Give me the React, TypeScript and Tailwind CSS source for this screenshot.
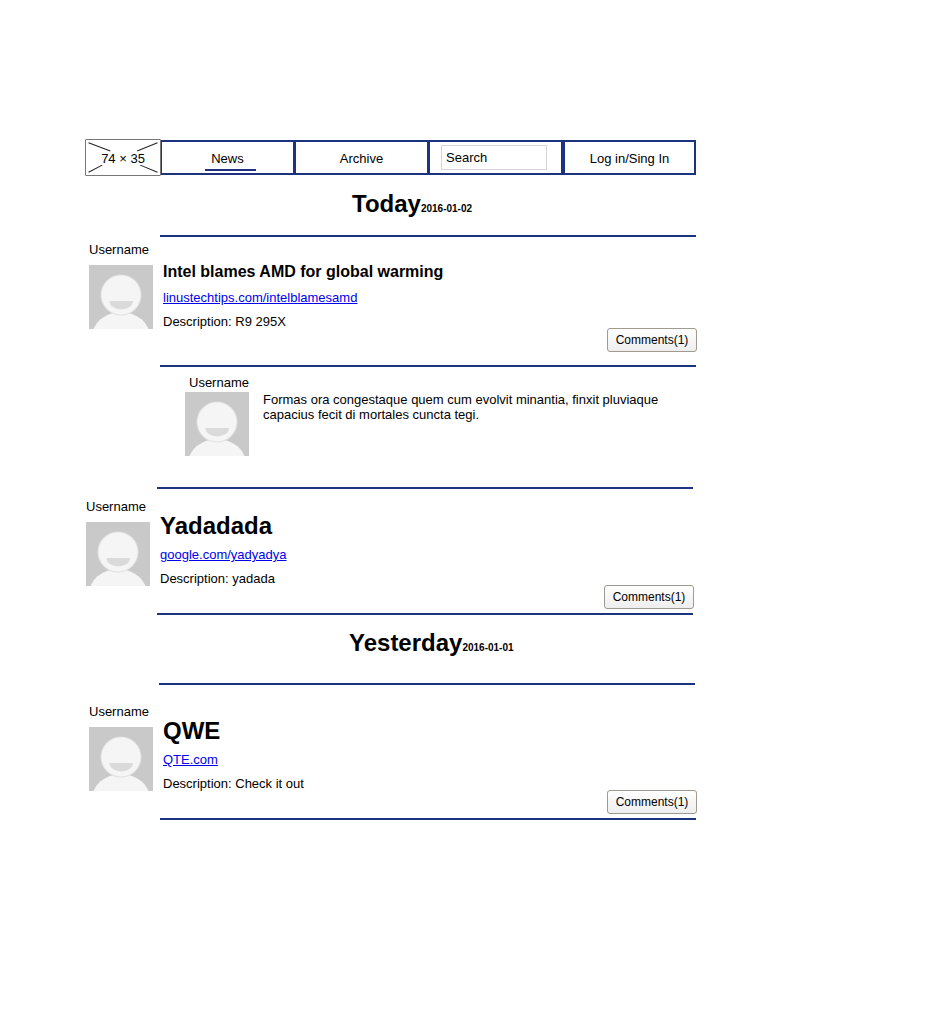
const navClass = "flex h-[35px] items-center justify-center border-2 border-[#1c3380] text-[13px] leading-4 text-black";

function LogoPlaceholder() {
  return (
    <div className="relative flex h-[37px] w-[76px] items-center justify-center rounded-[1px] border-[1.5px] border-[#777] pt-0.5 text-[13px] text-black">
      <svg className="absolute inset-0 h-full w-full" viewBox="0 0 73 34" fill="none" stroke="#222" strokeWidth="1">
        <path d="M2.5 2.5 L24 10.5 M70.5 2.5 L50.5 10.5 M2.5 31.5 L16 24.5 M70.5 31.5 L53.5 24.5" />
      </svg>
      <span className="relative">74 × 35</span>
    </div>
  );
}

function Avatar() {
  return (
    <svg className="block h-16 w-16 shrink-0" viewBox="0 0 64 64">
      <rect width="64" height="64" fill="#c9c9c9" />
      <ellipse cx="32" cy="72" rx="29" ry="25" fill="#f5f5f5" />
      <circle cx="32" cy="30" r="20.5" fill="#e2e2e2" />
      <circle cx="32" cy="30" r="19.5" fill="#f5f5f5" />
      <path d="M20.5 36 H44 A11.75 8.5 0 0 1 20.5 36 Z" fill="#dadada" />
    </svg>
  );
}

function Divider({ className }: { className: string }) {
  return <div className={`h-0.5 w-[536px] bg-[#1c3380] ${className}`} />;
}

function CommentsButton() {
  return (
    <button className="flex h-6 w-[90px] items-center justify-center rounded-[3px] border border-[#a09a90] bg-gradient-to-b from-white to-[#eeeeee] text-xs text-black">
      Comments(1)
    </button>
  );
}

function Post({ title, titleClass, href, desc }: { title: string; titleClass: string; href: string; desc: string }) {
  return (
    <div className="relative">
      <p className="ml-1 h-4 text-[13px] leading-4 text-black">Username</p>
      <div className="mt-[7px] flex">
        <div className="ml-1">
          <Avatar />
        </div>
        <div className="ml-2.5 flex h-[65px] flex-col justify-end">
          <h3 className={`font-bold text-black ${titleClass}`}>{title}</h3>
          <a href="#" className="mt-[5px] h-4 text-[13px] leading-4 text-[#0000ee] underline">{href}</a>
          <p className="mt-2 h-4 text-[13px] leading-4 text-black">{desc}</p>
        </div>
      </div>
      <div className="-mt-0.5 flex w-[612px] justify-end">
        <CommentsButton />
      </div>
    </div>
  );
}

export default function App() {
  return (
    <div className="min-h-[1011px] bg-white pl-[85px] pt-[139px] font-['Liberation_Sans',Arial,sans-serif]">
      <nav className="flex items-start">
        <LogoPlaceholder />
        <div className="-ml-px mt-px flex">
          <div className={`${navClass} w-[135px]`}>
            <span className="relative pt-[2px]">
              News
              <span className="absolute -bottom-1 left-[-6px] h-0.5 w-[51px] bg-[#1c3380]" />
            </span>
          </div>
          <div className={`${navClass} -ml-px w-[135px] pt-[2px]`}>Archive</div>
          <div className={`${navClass} -ml-px w-[135px]`}>
            <input
              readOnly
              value="Search"
              className="-ml-[3px] -mt-px h-[25px] w-[106px] border border-[#d5d5dd] px-1 text-[13px] text-black outline-none"
            />
          </div>
          <div className={`${navClass} w-[133px] pt-[2px]`}>Log in/Sing In</div>
        </div>
      </nav>

      <h2 className="ml-[267px] mt-[12px] flex h-8 items-baseline font-bold text-black">
        <span className="text-2xl leading-8">Today</span>
        <span className="text-[10px]">2016-01-02</span>
      </h2>
      <Divider className="ml-[75px] mt-[15px]" />

      <div className="mt-[5px]">
        <Post title="Intel blames AMD for global warming" titleClass="mb-px text-base" href="linustechtips.com/intelblamesamd" desc="Description: R9 295X" />
      </div>
      <Divider className="ml-[75px] mt-[13px]" />

      <div className="ml-[100px] mt-2">
        <p className="ml-1 h-4 text-[13px] leading-4 text-black">Username</p>
        <div className="mt-px flex">
          <Avatar />
          <p className="ml-3.5 w-[430px] text-[13px] leading-[15px] text-black">
            Formas ora congestaque quem cum evolvit minantia, finxit pluviaque capacius fecit di mortales cuncta tegi.
          </p>
        </div>
      </div>
      <Divider className="ml-[72px] mt-[31px]" />

      <div className="-ml-[3px] mt-[10px]">
        <Post title="Yadadada" titleClass="text-2xl" href="google.com/yadyadya" desc="Description: yadada" />
      </div>
      <Divider className="ml-[72px] mt-1" />

      <h2 className="ml-[264px] mt-[12px] flex h-8 items-baseline font-bold text-black">
        <span className="text-2xl leading-8">Yesterday</span>
        <span className="text-[10px]">2016-01-01</span>
      </h2>
      <Divider className="ml-[74px] mt-[24px]" />

      <div className="mt-[19px]">
        <Post title="QWE" titleClass="text-2xl" href="QTE.com" desc="Description: Check it out" />
      </div>
      <Divider className="ml-[75px] mt-1" />
    </div>
  );
}
